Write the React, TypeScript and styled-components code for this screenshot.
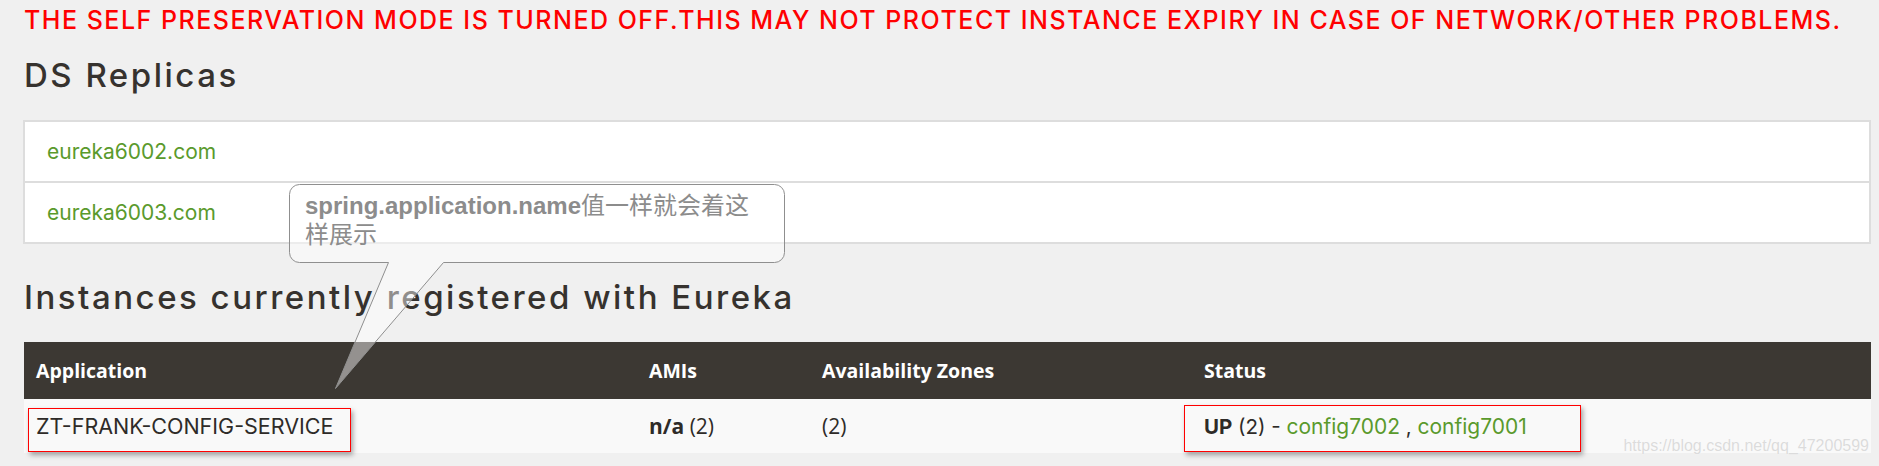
import styled, { createGlobalStyle } from "styled-components";

const GlobalStyle = createGlobalStyle`
  body {
    margin: 0;
    background: #f0f0f0;
  }
`;

const Page = styled.div`
  position: relative;
  box-sizing: border-box;
  height: 466px;
  overflow: hidden;
  padding: 4px 8px 0 24px;
  font-family: Inter, "Open Sans", sans-serif;
  color: #333;
`;

const Warning = styled.h4`
  margin: 0;
  font-family: Inter, "Open Sans", sans-serif;
  font-size: 25px;
  font-weight: 500;
  letter-spacing: 1.5px;
  line-height: 32px;
  color: #ff0000;
  white-space: nowrap;
`;

const Heading = styled.h2<{ $top: number }>`
  margin: ${(p) => p.$top}px 0 0;
  font-family: Inter, sans-serif;
  font-size: 33px;
  font-weight: 500;
  letter-spacing: 2.5px;
  line-height: 40px;
  color: #36322e;
`;

const ReplicaBox = styled.div`
  margin-top: 25px;
  margin-left: -1px;
  border: 2px solid #dddddd;
  background: #fff;
`;

const ReplicaRow = styled.div`
  height: 59px;
  display: flex;
  align-items: center;
  padding-left: 22px;
  & + & {
    border-top: 2px solid #dddddd;
  }
`;

const Link = styled.a`
  color: #5a9a2c;
  font-size: 21px;
  text-decoration: none;
`;

const Table = styled.div`
  margin-top: 25px;
`;

const Grid = styled.div<{ $head?: boolean }>`
  display: grid;
  grid-template-columns: 613px 173px 382px 1fr;
  align-items: center;
  height: ${(p) => (p.$head ? 57 : 54)}px;
  background: ${(p) => (p.$head ? "#3c3833" : "#f9f9f9")};
`;

const HeadCell = styled.div`
  padding-left: 12px;
  font-family: "Open Sans", sans-serif;
  font-size: 19.5px;
  font-weight: 700;
  color: #fff;
`;

const Cell = styled.div<{ $ubuntu?: boolean }>`
  padding-left: 12px;
  font-family: ${(p) => (p.$ubuntu ? '"Open Sans", sans-serif' : "Inter, sans-serif")};
  font-size: ${(p) => (p.$ubuntu ? 21 : 21.5)}px;
  color: #2e2b28;
  white-space: nowrap;
`;

const StatusCell = styled(Cell)`
  font-size: 20.5px;
`;

const Strong = styled.b`
  font-weight: 700;
`;

const Callout = styled.div`
  position: absolute;
  left: 289px;
  top: 184px;
  width: 497px;
  height: 206px;
  pointer-events: none;
`;

const CalloutShape = styled.svg`
  position: absolute;
  inset: 0;
`;

const CalloutText = styled.div`
  position: absolute;
  left: 16px;
  top: 7px;
  font-family: "Liberation Sans", "Noto Sans CJK SC", sans-serif;
  font-size: 24px;
  line-height: 29px;
  color: #8c8c8c;
  white-space: nowrap;
`;

const Mark = styled.div<{ $x: number; $y: number; $w: number; $h: number }>`
  position: absolute;
  left: ${(p) => p.$x}px;
  top: ${(p) => p.$y}px;
  width: ${(p) => p.$w}px;
  height: ${(p) => p.$h}px;
  box-sizing: border-box;
  border: 1px solid #f00;
  box-shadow: 2px 3px 5px rgba(0, 0, 0, 0.35);
`;

const Watermark = styled.div`
  position: absolute;
  right: 10px;
  top: 437px;
  font-family: "Liberation Sans", Arial, sans-serif;
  font-size: 16px;
  color: rgba(215, 215, 215, 0.9);
  text-shadow: 0 0 1px #fff;
  white-space: nowrap;
`;

const replicas = ["eureka6002.com", "eureka6003.com"];

export default function App() {
  return (
    <>
      <GlobalStyle />
      <Page>
        <Warning>
          THE SELF PRESERVATION MODE IS TURNED OFF.THIS MAY NOT PROTECT INSTANCE EXPIRY IN CASE OF
          NETWORK/OTHER PROBLEMS.
        </Warning>
        <Heading $top={19}>DS Replicas</Heading>
        <ReplicaBox>
          {replicas.map((r) => (
            <ReplicaRow key={r}>
              <Link href="#">{r}</Link>
            </ReplicaRow>
          ))}
        </ReplicaBox>
        <Heading $top={33}>Instances currently registered with Eureka</Heading>
        <Table>
          <Grid $head>
            <HeadCell>Application</HeadCell>
            <HeadCell>AMIs</HeadCell>
            <HeadCell>Availability Zones</HeadCell>
            <HeadCell>Status</HeadCell>
          </Grid>
          <Grid>
            <Cell>ZT-FRANK-CONFIG-SERVICE</Cell>
            <Cell $ubuntu>
              <Strong>n/a</Strong> (2)
            </Cell>
            <Cell $ubuntu>(2)</Cell>
            <StatusCell>
              <Strong>UP</Strong> (2) - <Link href="#">config7002</Link> ,{" "}
              <Link href="#">config7001</Link>
            </StatusCell>
          </Grid>
        </Table>

        <Callout>
          <CalloutShape width="497" height="206" viewBox="0 0 497 206">
            <path
              d="M10.5 0.5 H485.5 a10 10 0 0 1 10 10 V68.5 a10 10 0 0 1 -10 10 H154.5 L46.5 204.5 L99.5 78.5 H10.5 a10 10 0 0 1 -10 -10 V10.5 a10 10 0 0 1 10 -10 Z"
              fill="rgba(255,255,255,0.45)"
              stroke="#8f8f8f"
              strokeWidth="1"
            />
          </CalloutShape>
          <CalloutText>
            <Strong>spring.application.name</Strong>值一样就会着这
            <br />
            样展示
          </CalloutText>
        </Callout>

        <Mark $x={28} $y={408} $w={323} $h={44} />
        <Mark $x={1184} $y={405} $w={397} $h={47} />
        <Watermark>https://blog.csdn.net/qq_47200599</Watermark>
      </Page>
    </>
  );
}
